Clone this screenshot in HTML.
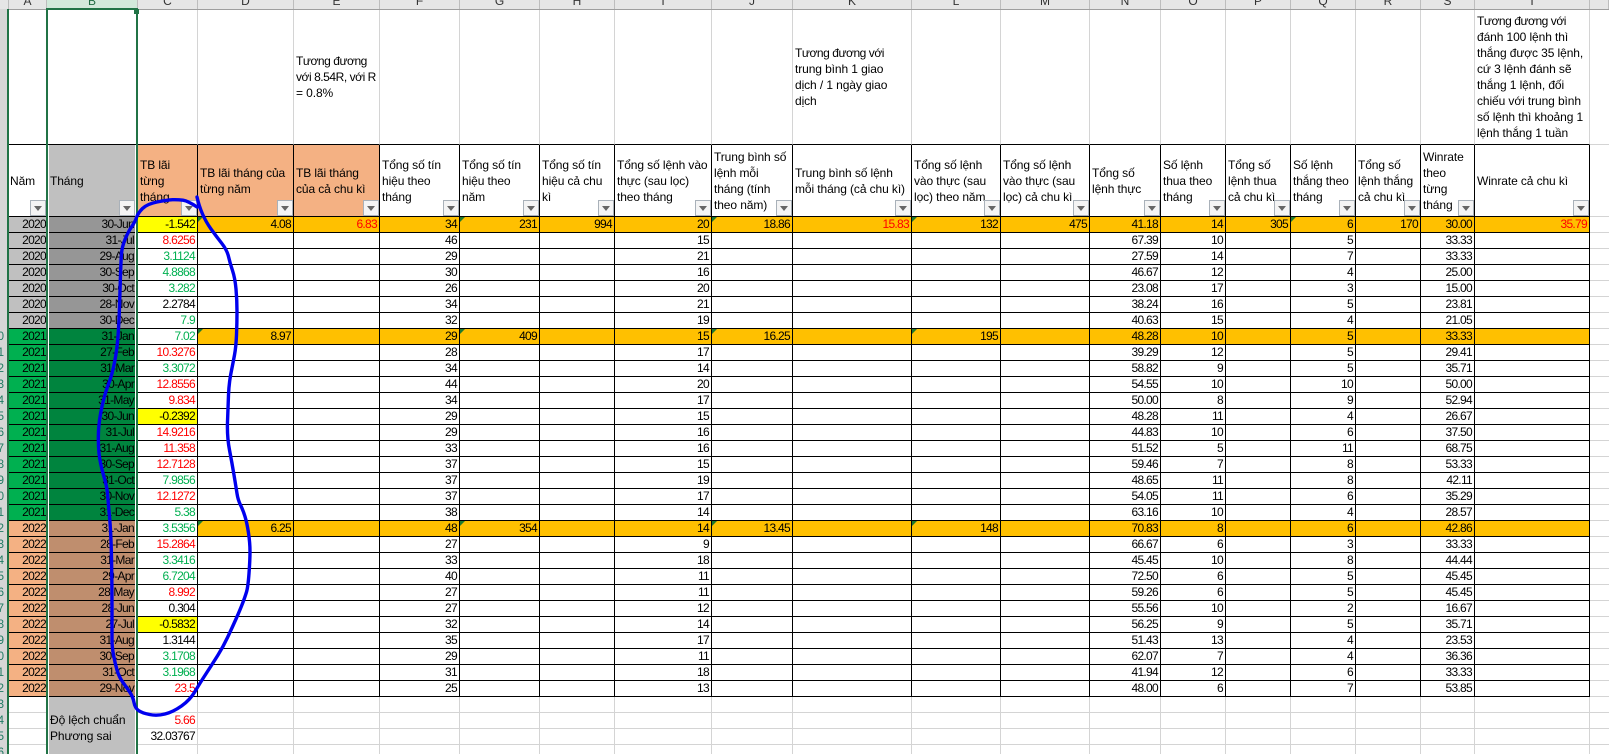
<!DOCTYPE html>
<html lang="vi">
<head>
<meta charset="utf-8">
<title>Bảng thống kê</title>
<style>
html,body{margin:0;padding:0;width:1609px;height:754px;overflow:hidden;background:#fff}
body{position:relative;font-family:"Liberation Sans","Noto Sans CJK SC",sans-serif;font-size:12px;color:#000}
#hd{position:absolute;left:0;top:0;width:1609px;height:9px;background:#e6e6e6;overflow:hidden}
#hd div{position:absolute;top:0;height:9px;box-sizing:border-box;border-right:1px solid #bdbdbd;text-align:center;line-height:16px;padding-top:0}
#hd span{position:relative;top:-7px;display:block;color:#333}
#hline{position:absolute;left:0;top:9px;width:1609px;height:1px;background:#9e9e9e;z-index:4}
#rh{position:absolute;left:0;top:9px;width:7px;height:745px;background:#d6d6d6;overflow:hidden;z-index:5}
#rh div{position:absolute;right:3px;top:320px;text-align:right;line-height:16px;font-size:11.5px;color:#1f7a63;white-space:nowrap}
table{position:absolute;left:8px;top:9px;width:1601px;table-layout:fixed;border-collapse:separate;border-spacing:0}
td{box-sizing:border-box;height:16px;padding:0 2px 0 2px;border-right:1px solid #000;border-bottom:1px solid #000;text-align:right;white-space:nowrap;overflow:hidden;font-size:12px;letter-spacing:-.7px;line-height:15px;position:relative;vertical-align:middle}
td:nth-child(1){padding-right:0}
td:nth-child(2){padding-right:3px}
td:nth-child(21){border-color:#d4d4d4;border-right:0}
tr.top td{height:136px;border-right-color:#d4d4d4;text-align:left;font-size:12px;letter-spacing:-.1px;line-height:16px;padding-left:2px}
tr.top td:nth-child(-n+20){border-bottom-color:#000}
tr.h td{height:72px;text-align:left;font-size:12px;letter-spacing:-.1px;line-height:16px;padding-left:2px;padding-right:0;overflow:hidden}
tr.l td{border-color:#d4d4d4}
tr.l td:nth-child(2){background:#c0c0c0;border-color:#c0c0c0;text-align:left;font-size:12px;letter-spacing:-.1px;padding-left:3px}
tr.y0 td:nth-child(1){background:#c0c0c0}
tr.y0 td:nth-child(2){background:#969696}
tr.y1 td:nth-child(1){background:#00b050}
tr.y1 td:nth-child(2){background:#00843e}
tr.y2 td:nth-child(1){background:#f4b183}
tr.y2 td:nth-child(2){background:#bf8e6e}
tr.o td:nth-child(n+4):nth-child(-n+20){background:#ffc000}
.or{background:#f4b183}
.gy{background:#c0c0c0}
.r{color:#f00}
.g{color:#00b050}
.ye{background:#ff0}
.n{letter-spacing:-.45px}
.t:before{content:"";position:absolute;left:0;top:0;border-top:5px solid #1f7a2e;border-right:5px solid transparent}
.f{position:absolute;right:0;bottom:0;width:16px;height:16px;box-sizing:border-box;border:1px solid #a9b1b9;background:#f4f4f4}
.f:after{content:"";position:absolute;left:3px;top:5px;border-top:5px solid #666;border-left:4px solid transparent;border-right:4px solid transparent}
.gl{position:absolute;background:#217346;z-index:6}
.wl{position:absolute;background:#fff;z-index:3}
svg{position:absolute;left:0;top:0;z-index:8}
</style>
</head>
<body>
<div id="hd">
<div style="left:0;width:9px"></div>
<div style="left:9px;width:38px"><span>A</span></div>
<div style="left:47px;width:91px;background:#d2e9db"><span style="color:#1f6b42">B</span></div>
<div style="left:138px;width:60px"><span>C</span></div>
<div style="left:198px;width:96px"><span>D</span></div>
<div style="left:294px;width:86px"><span>E</span></div>
<div style="left:380px;width:80px"><span>F</span></div>
<div style="left:460px;width:80px"><span>G</span></div>
<div style="left:540px;width:75px"><span>H</span></div>
<div style="left:615px;width:97px"><span>I</span></div>
<div style="left:712px;width:81px"><span>J</span></div>
<div style="left:793px;width:119px"><span>K</span></div>
<div style="left:912px;width:89px"><span>L</span></div>
<div style="left:1001px;width:89px"><span>M</span></div>
<div style="left:1090px;width:71px"><span>N</span></div>
<div style="left:1161px;width:65px"><span>O</span></div>
<div style="left:1226px;width:65px"><span>P</span></div>
<div style="left:1291px;width:65px"><span>Q</span></div>
<div style="left:1356px;width:65px"><span>R</span></div>
<div style="left:1421px;width:54px"><span>S</span></div>
<div style="left:1475px;width:115px"><span>T</span></div>
<div style="left:1590px;width:19px"></div>
</div>
<div id="hline"></div>
<div id="rh"><div>10<br>11<br>12<br>13<br>14<br>15<br>16<br>17<br>18<br>19<br>20<br>21<br>22<br>23<br>24<br>25<br>26<br>27<br>28<br>29<br>30<br>31<br>32<br>33<br>34<br>35<br>36</div></div>

<table>
<colgroup>
<col style="width:39px"><col style="width:91px"><col style="width:60px"><col style="width:96px"><col style="width:86px"><col style="width:80px"><col style="width:80px"><col style="width:75px"><col style="width:97px"><col style="width:81px"><col style="width:119px"><col style="width:89px"><col style="width:89px"><col style="width:71px"><col style="width:65px"><col style="width:65px"><col style="width:65px"><col style="width:65px"><col style="width:54px"><col style="width:115px"><col style="width:19px">
</colgroup>
<tr class="top"><td></td><td></td><td></td><td></td><td><span class="n">Tương đương</span><br><span class="n">với 8.54R, với R</span><br>= 0.8%</td><td></td><td></td><td></td><td></td><td></td><td><span class="n">Tương đương với</span><br>trung bình 1 giao<br>dịch / 1 ngày giao<br>dịch</td><td></td><td></td><td></td><td></td><td></td><td></td><td></td><td></td><td><span class="n">Tương đương với</span><br>đánh 100 lệnh thì<br>thắng được 35 lệnh,<br>cứ 3 lệnh đánh sẽ<br>thắng 1 lệnh, đối<br>chiếu với trung bình<br>số lệnh thì khoảng 1<br>lệnh thắng 1 tuần</td><td></td></tr>
<tr class="h"><td>Năm<i class="f"></i></td><td class="gy" style="padding-left:3px">Tháng<i class="f" style="right:2px"></i></td><td class="or">TB lãi<br>từng<br>tháng<i class="f"></i></td><td class="or">TB lãi tháng của<br>từng năm<i class="f"></i></td><td class="or">TB lãi tháng<br>của cả chu kì<i class="f"></i></td><td>Tổng số tín<br>hiệu theo<br>tháng<i class="f"></i></td><td>Tổng số tín<br>hiệu theo<br>năm<i class="f"></i></td><td>Tổng số tín<br>hiệu cả chu<br>kì<i class="f"></i></td><td>Tổng số lệnh vào<br>thực (sau lọc)<br>theo tháng<i class="f"></i></td><td>Trung bình số<br>lệnh mỗi<br>tháng (tính<br>theo năm)<i class="f"></i></td><td>Trung bình số lệnh<br>mỗi tháng (cả chu kì)<i class="f"></i></td><td>Tổng số lệnh<br>vào thực (sau<br>lọc) theo năm<i class="f"></i></td><td>Tổng số lệnh<br>vào thực (sau<br>lọc) cả chu kì<i class="f"></i></td><td>Tổng số<br>lệnh thực<i class="f"></i></td><td>Số lệnh<br>thua theo<br>tháng<i class="f"></i></td><td>Tổng số<br>lệnh thua<br>cả chu kì<i class="f"></i></td><td>Số lệnh<br>thắng theo<br>tháng<i class="f"></i></td><td>Tổng số<br>lệnh thắng<br>cả chu kì<i class="f"></i></td><td>Winrate<br>theo<br>từng<br>tháng<i class="f"></i></td><td>Winrate cả chu kì<i class="f"></i></td><td></td></tr>
<tr class="y0 o"><td>2020</td><td>30-Jun</td><td class="ye">-1.542</td><td class="t">4.08</td><td class="r">6.83</td><td>34</td><td class="t">231</td><td>994</td><td>20</td><td class="t">18.86</td><td class="r">15.83</td><td class="t">132</td><td>475</td><td>41.18</td><td>14</td><td>305</td><td class="t">6</td><td>170</td><td>30.00</td><td class="r">35.79</td><td></td></tr>
<tr class="y0"><td>2020</td><td>31-Jul</td><td class="r">8.6256</td><td></td><td></td><td>46</td><td></td><td></td><td>15</td><td></td><td></td><td></td><td></td><td>67.39</td><td>10</td><td></td><td>5</td><td></td><td>33.33</td><td></td><td></td></tr>
<tr class="y0"><td>2020</td><td>29-Aug</td><td class="g">3.1124</td><td></td><td></td><td>29</td><td></td><td></td><td>21</td><td></td><td></td><td></td><td></td><td>27.59</td><td>14</td><td></td><td>7</td><td></td><td>33.33</td><td></td><td></td></tr>
<tr class="y0"><td>2020</td><td>30-Sep</td><td class="g">4.8868</td><td></td><td></td><td>30</td><td></td><td></td><td>16</td><td></td><td></td><td></td><td></td><td>46.67</td><td>12</td><td></td><td>4</td><td></td><td>25.00</td><td></td><td></td></tr>
<tr class="y0"><td>2020</td><td>30-Oct</td><td class="g">3.282</td><td></td><td></td><td>26</td><td></td><td></td><td>20</td><td></td><td></td><td></td><td></td><td>23.08</td><td>17</td><td></td><td>3</td><td></td><td>15.00</td><td></td><td></td></tr>
<tr class="y0"><td>2020</td><td>28-Nov</td><td>2.2784</td><td></td><td></td><td>34</td><td></td><td></td><td>21</td><td></td><td></td><td></td><td></td><td>38.24</td><td>16</td><td></td><td>5</td><td></td><td>23.81</td><td></td><td></td></tr>
<tr class="y0"><td>2020</td><td>30-Dec</td><td class="g">7.9</td><td></td><td></td><td>32</td><td></td><td></td><td>19</td><td></td><td></td><td></td><td></td><td>40.63</td><td>15</td><td></td><td>4</td><td></td><td>21.05</td><td></td><td></td></tr>
<tr class="y1 o"><td>2021</td><td>31-Jan</td><td class="g">7.02</td><td class="t">8.97</td><td></td><td>29</td><td class="t">409</td><td></td><td>15</td><td class="t">16.25</td><td></td><td class="t">195</td><td></td><td>48.28</td><td>10</td><td></td><td>5</td><td></td><td>33.33</td><td></td><td></td></tr>
<tr class="y1"><td>2021</td><td>27-Feb</td><td class="r">10.3276</td><td></td><td></td><td>28</td><td></td><td></td><td>17</td><td></td><td></td><td></td><td></td><td>39.29</td><td>12</td><td></td><td>5</td><td></td><td>29.41</td><td></td><td></td></tr>
<tr class="y1"><td>2021</td><td>31-Mar</td><td class="g">3.3072</td><td></td><td></td><td>34</td><td></td><td></td><td>14</td><td></td><td></td><td></td><td></td><td>58.82</td><td>9</td><td></td><td>5</td><td></td><td>35.71</td><td></td><td></td></tr>
<tr class="y1"><td>2021</td><td>30-Apr</td><td class="r">12.8556</td><td></td><td></td><td>44</td><td></td><td></td><td>20</td><td></td><td></td><td></td><td></td><td>54.55</td><td>10</td><td></td><td>10</td><td></td><td>50.00</td><td></td><td></td></tr>
<tr class="y1"><td>2021</td><td>31-May</td><td class="r">9.834</td><td></td><td></td><td>34</td><td></td><td></td><td>17</td><td></td><td></td><td></td><td></td><td>50.00</td><td>8</td><td></td><td>9</td><td></td><td>52.94</td><td></td><td></td></tr>
<tr class="y1"><td>2021</td><td>30-Jun</td><td class="ye">-0.2392</td><td></td><td></td><td>29</td><td></td><td></td><td>15</td><td></td><td></td><td></td><td></td><td>48.28</td><td>11</td><td></td><td>4</td><td></td><td>26.67</td><td></td><td></td></tr>
<tr class="y1"><td>2021</td><td>31-Jul</td><td class="r">14.9216</td><td></td><td></td><td>29</td><td></td><td></td><td>16</td><td></td><td></td><td></td><td></td><td>44.83</td><td>10</td><td></td><td>6</td><td></td><td>37.50</td><td></td><td></td></tr>
<tr class="y1"><td>2021</td><td>31-Aug</td><td class="r">11.358</td><td></td><td></td><td>33</td><td></td><td></td><td>16</td><td></td><td></td><td></td><td></td><td>51.52</td><td>5</td><td></td><td>11</td><td></td><td>68.75</td><td></td><td></td></tr>
<tr class="y1"><td>2021</td><td>30-Sep</td><td class="r">12.7128</td><td></td><td></td><td>37</td><td></td><td></td><td>15</td><td></td><td></td><td></td><td></td><td>59.46</td><td>7</td><td></td><td>8</td><td></td><td>53.33</td><td></td><td></td></tr>
<tr class="y1"><td>2021</td><td>31-Oct</td><td class="g">7.9856</td><td></td><td></td><td>37</td><td></td><td></td><td>19</td><td></td><td></td><td></td><td></td><td>48.65</td><td>11</td><td></td><td>8</td><td></td><td>42.11</td><td></td><td></td></tr>
<tr class="y1"><td>2021</td><td>30-Nov</td><td class="r">12.1272</td><td></td><td></td><td>37</td><td></td><td></td><td>17</td><td></td><td></td><td></td><td></td><td>54.05</td><td>11</td><td></td><td>6</td><td></td><td>35.29</td><td></td><td></td></tr>
<tr class="y1"><td>2021</td><td>31-Dec</td><td class="g">5.38</td><td></td><td></td><td>38</td><td></td><td></td><td>14</td><td></td><td></td><td></td><td></td><td>63.16</td><td>10</td><td></td><td>4</td><td></td><td>28.57</td><td></td><td></td></tr>
<tr class="y2 o"><td>2022</td><td>31-Jan</td><td class="g">3.5356</td><td class="t">6.25</td><td></td><td>48</td><td class="t">354</td><td></td><td>14</td><td class="t">13.45</td><td></td><td class="t">148</td><td></td><td>70.83</td><td>8</td><td></td><td>6</td><td></td><td>42.86</td><td></td><td></td></tr>
<tr class="y2"><td>2022</td><td>28-Feb</td><td class="r">15.2864</td><td></td><td></td><td>27</td><td></td><td></td><td>9</td><td></td><td></td><td></td><td></td><td>66.67</td><td>6</td><td></td><td>3</td><td></td><td>33.33</td><td></td><td></td></tr>
<tr class="y2"><td>2022</td><td>31-Mar</td><td class="g">3.3416</td><td></td><td></td><td>33</td><td></td><td></td><td>18</td><td></td><td></td><td></td><td></td><td>45.45</td><td>10</td><td></td><td>8</td><td></td><td>44.44</td><td></td><td></td></tr>
<tr class="y2"><td>2022</td><td>29-Apr</td><td class="g">6.7204</td><td></td><td></td><td>40</td><td></td><td></td><td>11</td><td></td><td></td><td></td><td></td><td>72.50</td><td>6</td><td></td><td>5</td><td></td><td>45.45</td><td></td><td></td></tr>
<tr class="y2"><td>2022</td><td>28-May</td><td class="r">8.992</td><td></td><td></td><td>27</td><td></td><td></td><td>11</td><td></td><td></td><td></td><td></td><td>59.26</td><td>6</td><td></td><td>5</td><td></td><td>45.45</td><td></td><td></td></tr>
<tr class="y2"><td>2022</td><td>28-Jun</td><td>0.304</td><td></td><td></td><td>27</td><td></td><td></td><td>12</td><td></td><td></td><td></td><td></td><td>55.56</td><td>10</td><td></td><td>2</td><td></td><td>16.67</td><td></td><td></td></tr>
<tr class="y2"><td>2022</td><td>27-Jul</td><td class="ye">-0.5832</td><td></td><td></td><td>32</td><td></td><td></td><td>14</td><td></td><td></td><td></td><td></td><td>56.25</td><td>9</td><td></td><td>5</td><td></td><td>35.71</td><td></td><td></td></tr>
<tr class="y2"><td>2022</td><td>31-Aug</td><td>1.3144</td><td></td><td></td><td>35</td><td></td><td></td><td>17</td><td></td><td></td><td></td><td></td><td>51.43</td><td>13</td><td></td><td>4</td><td></td><td>23.53</td><td></td><td></td></tr>
<tr class="y2"><td>2022</td><td>30-Sep</td><td class="g">3.1708</td><td></td><td></td><td>29</td><td></td><td></td><td>11</td><td></td><td></td><td></td><td></td><td>62.07</td><td>7</td><td></td><td>4</td><td></td><td>36.36</td><td></td><td></td></tr>
<tr class="y2"><td>2022</td><td>31-Oct</td><td class="g">3.1968</td><td></td><td></td><td>31</td><td></td><td></td><td>18</td><td></td><td></td><td></td><td></td><td>41.94</td><td>12</td><td></td><td>6</td><td></td><td>33.33</td><td></td><td></td></tr>
<tr class="y2"><td>2022</td><td>29-Nov</td><td class="r">23.5</td><td></td><td></td><td>25</td><td></td><td></td><td>13</td><td></td><td></td><td></td><td></td><td>48.00</td><td>6</td><td></td><td>7</td><td></td><td>53.85</td><td></td><td></td></tr>
<tr class="l"><td></td><td></td><td></td><td></td><td></td><td></td><td></td><td></td><td></td><td></td><td></td><td></td><td></td><td></td><td></td><td></td><td></td><td></td><td></td><td></td><td></td></tr>
<tr class="l"><td></td><td>Độ lệch chuẩn</td><td class="r">5.66</td><td></td><td></td><td></td><td></td><td></td><td></td><td></td><td></td><td></td><td></td><td></td><td></td><td></td><td></td><td></td><td></td><td></td><td></td></tr>
<tr class="l"><td></td><td>Phương sai</td><td>32.03767</td><td></td><td></td><td></td><td></td><td></td><td></td><td></td><td></td><td></td><td></td><td></td><td></td><td></td><td></td><td></td><td></td><td></td><td></td></tr>
<tr class="l"><td></td><td></td><td></td><td></td><td></td><td></td><td></td><td></td><td></td><td></td><td></td><td></td><td></td><td></td><td></td><td></td><td></td><td></td><td></td><td></td><td></td></tr>
</table>

<div class="wl" style="left:48px;top:145px;width:1px;height:609px"></div>
<div class="wl" style="left:135px;top:145px;width:1px;height:609px"></div>
<div class="gl" style="left:7px;top:9px;width:2px;height:745px"></div>
<div class="gl" style="left:46px;top:9px;width:2px;height:745px"></div>
<div class="gl" style="left:136px;top:9px;width:2px;height:745px"></div>
<div class="gl" style="left:46px;top:8px;width:92px;height:2px"></div>
<div class="gl" style="left:134px;top:9px;width:5px;height:5px"></div>

<svg width="1609" height="754" viewBox="0 0 1609 754">
<path fill="none" stroke="#0000ee" stroke-width="3.4" stroke-linejoin="round" stroke-linecap="round" d="M197 207Q188 201 183 200.200Q178 199.500 172.500 199.700Q167 200 157 202Q147 204 142.500 208.500Q138 213 136.500 217.500Q135 222 131.500 227Q128 232 125 239.500Q122 247 121.500 253.500Q121 260 120.500 275Q120 290 119.500 306.500Q119 323 118 336.500Q117 350 114.500 362.500Q112 375 108.500 384Q105 393 102 406.500Q99 420 98.500 431.500Q98 443 99 453Q100 463 103.500 475Q107 487 107.500 493.500Q108 500 109.500 516.500Q111 533 111.500 558Q112 583 112 608Q112 633 112 640Q112 647 113.500 655Q115 663 117 670Q119 677 123 682.500Q127 688 130 692.500Q133 697 134 702.500Q135 708 138.500 710.500Q142 713 149.500 714.500Q157 716 165 714Q173 712 181.500 706Q190 700 195 691.500Q200 683 206.500 673Q213 663 218 655Q223 647 227.500 637.500Q232 628 236 619Q240 610 242.500 603.500Q245 597 246.500 592Q248 587 249 573.500Q250 560 250 551.500Q250 543 248.500 533Q247 523 245 516.500Q243 510 240.500 505Q238 500 237 493.500Q236 487 234 475Q232 463 229.500 450Q227 437 227.500 422Q228 407 228.500 395Q229 383 231 373Q233 363 234.500 355Q236 347 236.500 335Q237 323 237 311.500Q237 300 236 289Q235 278 232.500 270.500Q230 263 228.500 256.500Q227 250 221.500 243Q216 236 211 229Q206 222 202.500 214Q199 206 197 197"/>
</svg>
</body>
</html>
